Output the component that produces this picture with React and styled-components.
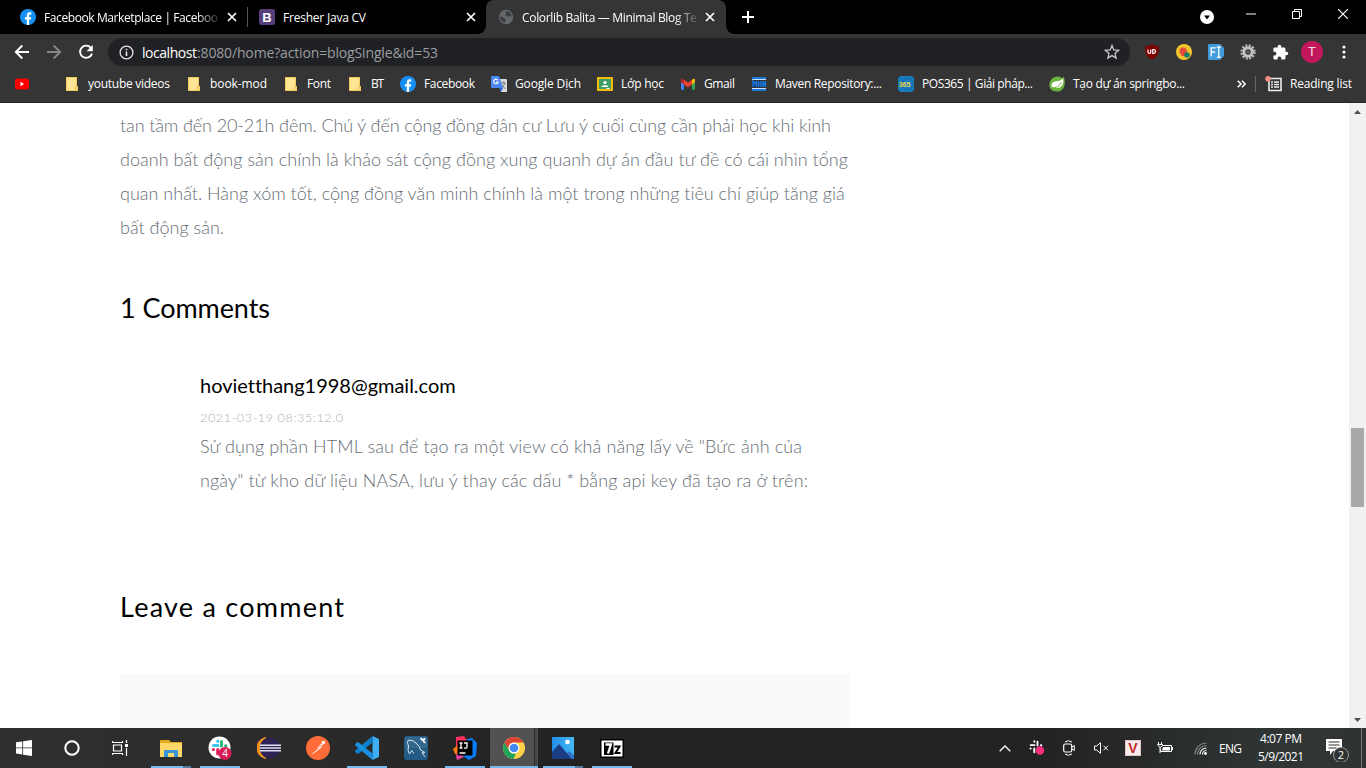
import React, { useLayoutEffect, useRef, useState } from "react";
import styled, { createGlobalStyle } from "styled-components";

const GlobalStyle = createGlobalStyle`
  * { box-sizing: border-box; }
  html, body { margin: 0; padding: 0; overflow: hidden; background: #fff; }
`;

const UI = `"Open Sans", "Noto Sans", sans-serif`;
const BODY = `Lato, "Noto Sans", sans-serif`;

const Screen = styled.div`
  width: 1366px;
  height: 768px;
  display: flex;
  flex-direction: column;
  overflow: hidden;
  font-family: ${UI};
  font-size: 12px;
`;

/* Text tracked so that it fills a given width */
const Tracked = styled.span`
  display: block;
  flex: none;
  white-space: pre;
  width: ${(p) => p.$w}px;
`;

function Fit({ w, children }) {
  const ref = useRef(null);
  const [space, setSpace] = useState(0);
  useLayoutEffect(() => {
    const natural = ref.current.getBoundingClientRect().width;
    setSpace((w - natural) / Math.max(1, children.length - 1));
  }, [w, children]);
  return (
    <Tracked $w={w}>
      <span ref={ref} style={{ letterSpacing: `${space}px` }}>{children}</span>
    </Tracked>
  );
}

/* ---------- Tab strip ---------- */
const TabStrip = styled.div`
  height: 34px;
  flex: none;
  background: #000;
  display: flex;
  color: #fff;
`;
const Tab = styled.div`
  position: relative;
  width: ${(p) => p.$w}px;
  height: 34px;
  padding-left: 12px;
  display: flex;
  align-items: center;
  gap: 8px;
  color: #fff;
  margin-left: ${(p) => p.$ml || 0}px;
  background: ${(p) => (p.$active ? "#353535" : "transparent")};
  border-radius: 8px 8px 0 0;
  ${(p) => p.$active && `
    &::before, &::after {
      content: "";
      position: absolute;
      bottom: 0;
      width: 8px;
      height: 8px;
    }
    &::before { left: -8px; background: radial-gradient(circle at 0 0, #000 7.5px, #353535 8px); }
    &::after { right: -8px; background: radial-gradient(circle at 100% 0, #000 7.5px, #353535 8px); }
  `}
`;
const TabTitle = styled.div`
  width: 175px;
  ${(p) => p.$fade && "mask-image: linear-gradient(90deg, #000 152px, transparent 179px);"}
`;
const TabDivider = styled.div`
  width: 1px;
  height: 20px;
  margin-top: 7px;
  background: #555;
`;
const CloseIcon = () => (
  <svg width="10" height="10" viewBox="0 0 10 10"><path d="M1 1l8 8M9 1l-8 8" stroke="#fff" strokeWidth="1.7" /></svg>
);
const NewTab = styled.div`
  width: 44px;
  display: flex;
  align-items: center;
  justify-content: center;
`;
const WindowControls = styled.div`
  margin-left: auto;
  display: flex;
`;
const Control = styled.div`
  width: ${(p) => p.$w || 46}px;
  height: ${(p) => p.$h || 28}px;
  display: flex;
  align-items: center;
  justify-content: center;
`;

/* ---------- Toolbar ---------- */
const Toolbar = styled.div`
  height: 36px;
  flex: none;
  background: #353535;
  display: flex;
  align-items: center;
  padding-left: 6px;
`;
const ToolButton = styled.div`
  width: 32px;
  height: 36px;
  flex: none;
  display: flex;
  align-items: center;
  justify-content: center;
`;
const Omnibox = styled.div`
  width: 1022px;
  height: 28px;
  margin: 0 6px;
  border-radius: 14px;
  background: #202124;
  display: flex;
  align-items: center;
  padding: 0 10px 0 11px;
  color: #9a9da1;
  font-size: 14px;
`;
const Url = styled.div`
  display: flex;
  margin-left: 8px;
  flex: 1;
`;
const Host = styled.span`color: #fff;`;
const Avatar = styled.div`
  width: 22px;
  height: 22px;
  border-radius: 50%;
  background: #c2185b;
  color: #f6dbe6;
  font: 13px/22px Roboto, sans-serif;
  text-align: center;
`;

/* ---------- Bookmarks ---------- */
const Bookmarks = styled.div`
  height: 33px;
  flex: none;
  background: #353535;
  border-bottom: 1px solid #242424;
  display: flex;
  align-items: center;
  gap: 16px;
  padding: 0 14px 5px;
  color: #fff;
`;
const Bookmark = styled.div`
  display: flex;
  align-items: center;
  gap: ${(p) => p.$gap ?? 8}px;
  margin-right: ${(p) => p.$mr || 0}px;
`;
const More = styled.div`
  margin-left: auto;
  display: flex;
  align-items: center;
`;
const Rule = styled.div`
  width: 1px;
  height: 16px;
  margin: 0 9px;
  background: #666;
`;

/* ---------- Page ---------- */
const Viewport = styled.div`
  height: 625px;
  flex: none;
  display: flex;
  background: #fff;
`;
const Page = styled.main`
  width: 1349px;
  height: 625px;
  padding: 5px 0 0 120px;
  overflow: hidden;
  font-family: ${BODY};
`;
const Paragraph = styled.div`
  font-size: 18px;
  font-weight: 300;
  line-height: 34px;
  color: #666d74;
`;
const Heading = styled.h3`
  margin: ${(p) => p.$mt}px 0 0;
  font-size: 27px;
  font-weight: 400;
  line-height: 34px;
  color: #000;
`;
const Comment = styled.article`
  margin: 48px 0 0 80px;
`;
const Author = styled.div`
  font-size: 20px;
  line-height: 24px;
  color: #000;
`;
const Meta = styled.div`
  margin: 11px 0 1px;
  font-size: 12.5px;
  font-weight: 300;
  line-height: 20px;
  color: #b0b0b0;
`;
const CommentBox = styled.div`
  width: 730px;
  height: 80px;
  margin-top: 50px;
  background: #f8f9fb;
`;
const Scrollbar = styled.div`
  width: 17px;
  background: #f1f1f1;
  display: flex;
  flex-direction: column;
  align-items: center;
  padding: 7px 0 6px;
`;
const Thumb = styled.div`
  width: 13px;
  height: 79px;
  margin: 314px 0 auto;
  background: #a8a8a8;
`;

/* ---------- Taskbar ---------- */
const Taskbar = styled.footer`
  height: 40px;
  flex: none;
  display: flex;
  background: linear-gradient(90deg, #303030 0, #2b2b2b 300px, #232323 500px, #232323 1050px, #303535 1280px, #303332 100%);
  color: #fff;
`;
const SystemSlot = styled.div`
  width: 48px;
  margin-right: ${(p) => p.$mr || 0}px;
  display: flex;
  align-items: center;
  justify-content: center;
`;
const AppSlot = styled.div`
  width: 49px;
  height: 40px;
  display: flex;
  flex-direction: column;
  align-items: center;
  justify-content: space-between;
  background: ${(p) => (p.$active ? "linear-gradient(90deg, #515151 44px, #292929 44px, #292929 45px, #484848 45px, #484848 48px, transparent 48px)" : "none")};
`;
const AppIcon = styled.div`
  height: 38px;
  padding-top: 2px;
  margin-right: 2px;
  display: flex;
  align-items: center;
`;
const Underline = styled.div`
  width: ${(p) => (p.$wide ? 48 : 40)}px;
  height: 2px;
  margin-right: 1px;
  background: ${(p) => (p.$split ? "linear-gradient(90deg, #76b9ed 32px, #527b9e 32px)" : "#76b9ed")};
`;
const Tray = styled.div`
  margin-left: auto;
  display: flex;
  align-items: center;
`;
const TrayIcon = styled.div`
  width: ${(p) => p.$w || 32}px;
  height: 40px;
  display: flex;
  align-items: center;
  justify-content: center;
`;
const Clock = styled.div`
  width: 46px;
  margin-left: 16px;
  display: flex;
  flex-direction: column;
  align-items: center;
  line-height: 18px;
`;
const Notify = styled.div`
  width: 41px;
  height: 40px;
  margin: 0 4px 0 17px;
  display: flex;
  align-items: center;
  border-right: 1px solid #777;
`;

/* ---------- Icons ---------- */
const Facebook = () => (
  <svg width="16" height="16" viewBox="0 0 16 16">
    <circle cx="8" cy="8" r="8" fill="#1690f5" />
    <path d="M6.8 16v-5.5H4.9V8.2h1.9V6.5c0-2.2 1.2-3.2 3-3.2.7 0 1.3.1 1.5.1v2h-1c-1 0-1.2.5-1.2 1.2v1.6h2.2l-.4 2.3H9.1V16z" fill="#fff" />
  </svg>
);
const letter = { fontFamily: "Liberation Sans", fontWeight: 700, textAnchor: "middle" };
const Bootstrap = () => (
  <svg width="16" height="16"><rect width="16" height="16" rx="2.5" fill="#563d7c" /><text x="8" y="12.6" fontSize="13" fill="#fff" {...letter}>B</text></svg>
);
const Globe = () => (
  <svg width="16" height="16" viewBox="0 0 16 16">
    <circle cx="8" cy="8" r="7.2" fill="#64686d" />
    <path d="M1.500 7.500c2-.3 3.500.2 4 1.300.5 1 2 .5 2 2v2.700C4.300 13.500 2 11 1.500 7.500zM7 2.500h4c1.500 1 2.500 3 2.500 5-1 .8-2 0-3-.2-1-.3-2 .2-2.800-.6-.8-1-.2-1.700.6-2C9 4.400 7.500 4 7 2.500z" fill="#3b3e41" />
  </svg>
);
const Back = ({ color = "#fff", flip }) => (
  <svg width="16" height="16" viewBox="0 0 16 16" transform={flip ? "scale(-1 1)" : undefined}><path d="M15 8H2M8.300 1.500L1.800 8l6.500 6.500" fill="none" stroke={color} strokeWidth="1.9" /></svg>
);
const Reload = () => (
  <svg width="16" height="16" viewBox="0 0 16 16"><path d="M13.200 4.200A6.100 6.100 0 1 0 14 9.600" fill="none" stroke="#fff" strokeWidth="1.9" /><path d="M14.800 1v6.200H8.600z" fill="#fff" /></svg>
);
const Info = () => (
  <svg width="15" height="15" viewBox="0 0 15 15"><circle cx="7.500" cy="7.500" r="6.400" fill="none" stroke="#e4e4e4" strokeWidth="1.300" /><path d="M7.500 6.500v4.500M7.500 3.700v1.600" stroke="#e4e4e4" strokeWidth="1.600" /></svg>
);
const Star = () => (
  <svg width="16" height="16" viewBox="0 0 16 16"><path d="M8 1.500l1.800 4.400 4.800.4-3.600 3.100 1.100 4.700L8 11.600l-4.100 2.500L5 9.400 1.400 6.300l4.800-.4z" fill="none" stroke="#c5c7c9" strokeWidth="1.300" /></svg>
);
const Ublock = () => (
  <svg width="16" height="16" viewBox="0 0 16 16"><path d="M8 .3c2 1.500 4 2 7 2 0 6.700-1 10.300-7 13.400C2 12.600 1 9 1 2.300 4 2.300 6 1.800 8 .3z" fill="#800000" /><path d="M4 5.600v2.600q0 1.200 1.400 1.200t1.400-1.200V5.600M8.800 5.600v3.800h.9a1.900 1.900 0 0 0 0-3.800z" fill="none" stroke="#fff" strokeWidth="1.200" /></svg>
);
const Bug = () => (
  <svg width="16" height="16" viewBox="0 0 16 16"><circle cx="8" cy="8" r="8" fill="#f5c52c" /><path d="M3.500 5.500l8 6M3 9l9-3M5 12l5-9" stroke="#b08a24" strokeWidth=".8" /><ellipse cx="7.500" cy="7.700" rx="3.400" ry="4.500" fill="#e4483a" transform="rotate(-25 7.500 8)" /><circle cx="11" cy="11" r="2.800" fill="#16816a" /></svg>
);
const FontExt = () => (
  <svg width="16" height="16" viewBox="0 0 16 16"><path d="M0 1q0-1 1-1h11l4 4v8l-4 4H1q-1 0-1-1z" fill="#419bdc" /><path d="M3.200 12.500V3.800h4.500M3.200 8h4M8.800 3h1.200l.8.8.8-.8h1.200M10.800 3.800v8.700M8.800 13.300H10l.8-.8.8.8h1.200" fill="none" stroke="#fff" strokeWidth="1.300" /></svg>
);
const Gear = () => (
  <svg width="16" height="16" viewBox="0 0 16 16"><circle cx="8" cy="8" r="6.500" fill="none" stroke="#b9b9b9" strokeWidth="2.400" strokeDasharray="2 1.400" /><circle cx="8" cy="8" r="4.200" fill="none" stroke="#c4c4c4" strokeWidth="3" /><circle cx="8" cy="8" r="1.600" fill="#666" /></svg>
);
const Puzzle = () => (
  <svg width="17" height="17" viewBox="0 0 24 24"><path d="M20.500 11H19V7a2 2 0 0 0-2-2h-4V3.500a2.500 2.500 0 0 0-5 0V5H4a2 2 0 0 0-2 2v3.800h1.500a2.700 2.700 0 0 1 0 5.400H2V20a2 2 0 0 0 2 2h3.800v-1.500a2.700 2.700 0 0 1 5.400 0V22H17a2 2 0 0 0 2-2v-4h1.500a2.500 2.500 0 0 0 0-5z" fill="#fff" /></svg>
);
const Dots = () => (
  <svg width="4" height="14"><circle cx="2" cy="2" r="1.600" fill="#fff" /><circle cx="2" cy="7" r="1.600" fill="#fff" /><circle cx="2" cy="12" r="1.600" fill="#fff" /></svg>
);
const Youtube = () => (
  <svg width="16" height="16"><rect x="1" y="2.500" width="14" height="11" rx="2.500" fill="#f00" /><path d="M6.500 5.800v4.400L10 8z" fill="#fff" /></svg>
);
const Folder = () => (
  <svg width="16" height="16"><path d="M2 1h11v9h1v5H2z" fill="#f0cb5c" /><path d="M3 2h9v9h1v3H3z" fill="#ffe494" /><path d="M11.500 14v-3.500h1.500" fill="none" stroke="#e4bc4c" /></svg>
);
const Translate = () => (
  <svg width="16" height="16"><path d="M6 3h9q1 0 1 1v12h-6z" fill="#d9dcdf" /><path d="M9.500 7h5M12 5.500V7M14 7q-1 3-4 5M10.500 9l4 4" stroke="#68757d" fill="none" /><path d="M0 1q0-1 1-1h7l4 12H1q-1 0-1-1z" fill="#4a89f3" /><path d="M8 12h4l-2 4z" fill="#3367c8" /><path d="M6.900 4.200A2.300 2.300 0 1 0 7.200 6H5" fill="none" stroke="#fff" strokeWidth="1.100" /></svg>
);
const Classroom = () => (
  <svg width="16" height="16"><rect y="1" width="16" height="14" rx="1" fill="#f7bb0b" /><rect x="2" y="3" width="12" height="10" fill="#3fa066" /><circle cx="8" cy="6.500" r="1.600" fill="#fff" /><path d="M4.500 11c0-2.500 7-2.500 7 0zM9.500 12h3v1h-3z" fill="#fff" /></svg>
);
const Gmail = () => (
  <svg width="16" height="16"><path d="M1 4v9q0 .8.800.8H4V6z" fill="#4285f4" /><path d="M15 4v9q0 .8-.8.8H12V6z" fill="#34a853" /><path d="M12 3.800l1-.8q2-.8 2 1.200v2L12 8.500z" fill="#fbbc04" /><path d="M4 3.800L3 3Q1 2.400 1 4.200v2l3 2.300z" fill="#c5221f" /><path d="M4 8.500V3.800l4 3 4-3v4.700l-4 3z" fill="#ea4335" /></svg>
);
const Maven = () => (
  <svg width="16" height="16"><path d="M1 1h14v2H1zM1 13h14v2H1z" fill="#1b77dc" /><path d="M1 3.500h14M1 12.500h14" stroke="#cde1f8" /><path d="M1 5h14v6H1z" fill="#193e6d" /><path d="M2 11V5l2 3 1.500-3v6M7.500 5v6M10 5v6M8 8h2M12 11V5l2.500 6V5" fill="none" stroke="#1b77dc" strokeWidth="1.200" /></svg>
);
const Pos = () => (
  <svg width="16" height="16"><rect width="16" height="16" rx="3.500" fill="#177bc2" /><circle cx="9.500" cy="8" r="5.500" fill="none" stroke="#1b659a" /><text x="6.500" y="10.500" fontSize="7" fill="#e7d34c" {...letter}>365</text></svg>
);
const Spring = () => (
  <svg width="16" height="16"><path d="M3 2.500Q8-1 13 2l2-1q3 12-5 14.500Q3 16 1 12-1 7 3 2.500z" fill="#6db33f" /><path d="M14 2.500Q12 5 7 5.200 1 6 3 11.300q9 2.500 11-3.500.700-3 0-5.300z" fill="#fff" /><path d="M3 12Q9 12 12.500 6.500" stroke="#6db33f" fill="none" /></svg>
);
const ReadingList = () => (
  <svg width="18" height="16"><path d="M4 2.500h12v12H4z" fill="none" stroke="#eee" strokeWidth="1.600" /><path d="M6 6h2M9 6h5M6 8.500h2M9 8.500h5M6 11h2M9 11h5" stroke="#eee" strokeWidth="1.300" /><circle cx="3" cy="2.800" r="2.800" fill="#f28b82" /></svg>
);
const Arrow = ({ up }) => (
  <svg width="7" height="4"><path d={up ? "M0 4L3.500 0 7 4z" : "M0 0h7L3.500 4z"} fill="#505050" /></svg>
);
const Windows = () => (
  <svg width="16" height="16" viewBox="0 0 16 16"><path d="M0 2.300L6.300 1.400v6.100H0zM7.100 1.300L16 0v7.500H7.100zM0 8.300h6.300v6.200L0 13.600zM7.100 8.300H16V16l-8.900-1.300z" fill="#fff" /></svg>
);
const TaskView = () => (
  <svg width="17" height="16" viewBox="0 0 17 16"><path d="M.5 1v1.500h10V1M.5 15v-1.500h10V15M1.500 5h8v6h-8zM14.500 0v3M14.500 8v8" fill="none" stroke="#fff" strokeWidth="1.200" /><path d="M13 4h3v3h-3z" fill="#fff" /></svg>
);
const Explorer = () => (
  <svg width="22" height="19" viewBox="0 0 22 19"><path d="M0 2q0-1 1-1h8l2 2h11v15H0z" fill="#e5a91c" /><path d="M0 4h22v14H0z" fill="#ffd867" /><path d="M4 18v-6q0-1 1-1h12q1 0 1 1v6h-4v-4H8v4z" fill="#3993db" /></svg>
);
const SlackMark = ({ mono }) => {
  const c = mono ? ["#fff", "#fff", "#fff", "#fff"] : ["#36c5f0", "#2eb67d", "#ecb22e", "#e01e5a"];
  return (
    <g strokeWidth={mono ? 2.2 : 3} strokeLinecap="round" fill="none">
      <path d="M2 6h4.500M6.300 1.500v.5" stroke={c[0]} /><path d="M10 2v4.500M14.500 6.200H14" stroke={c[1]} />
      <path d="M9.800 10.200H14M10 14v.5" stroke={c[2]} /><path d="M6.200 10v4.500M1.800 10H2" stroke={c[3]} />
    </g>
  );
};
const Slack = () => (
  <svg width="24" height="24" viewBox="0 0 24 24"><circle cx="11.500" cy="11.500" r="11" fill="#fff" /><g transform="translate(3.500 3.500)"><SlackMark /></g><circle cx="17" cy="17.500" r="6.500" fill="#d81b57" /><text x="17" y="21.200" fontSize="10" fill="#fff" fontFamily="Open Sans" textAnchor="middle">4</text></svg>
);
const Eclipse = () => (
  <svg width="24" height="22" viewBox="0 0 24 22"><path d="M9 .5a10.600 10.600 0 0 0 0 21A12 12 0 0 1 9 .5z" fill="#f7941e" stroke="#f7941e" /><circle cx="13" cy="11" r="10.300" fill="#2c2255" /><path d="M3 8.300h21M2.500 11h22M3 13.700h21" stroke="#e4e2ee" strokeWidth="1.600" /></svg>
);
const Postman = () => (
  <svg width="24" height="24" viewBox="0 0 24 24"><circle cx="12" cy="12" r="12" fill="#ff6c37" /><path d="M5 19l6-6 3.500-3 1.500 1-5 4z" fill="#fff" /><path d="M12 12.500l4.500-4.500" stroke="#fff" strokeWidth="1.800" /><circle cx="17.500" cy="6.500" r="1.700" fill="#fff" /><path d="M8 16l8-7" stroke="#ff6c37" strokeWidth=".8" /></svg>
);
const VSCode = () => (
  <svg width="24" height="24" viewBox="0 0 24 24"><path d="M17.500 0L24 3v18l-6.500 3z" fill="#3eaef5" /><path d="M17.500 0v6.500L4 17.300 2.500 18 0 15.800v-1z" fill="#0f7fcc" /><path d="M17.500 24v-6.500L4 6.700 2.500 6 0 8.200v1z" fill="#1892df" /></svg>
);
const MySQL = () => (
  <svg width="24" height="24" viewBox="0 0 24 24"><rect width="24" height="24" rx="3" fill="#235b84" /><rect x="1" y="1" width="22" height="11" rx="2" fill="#32688e" /><path d="M5.500 18Q3 15 4.500 10 2.500 6 4.200 4.300 8 3 12 7q4 3.500 4.500 7l4.500 2.500-3 .3 3 4M5.500 18l2.200-3.500 2.200 3" fill="none" stroke="#dfeaf1" strokeWidth="1" /><path d="M16.500 2l1.500 1.800L20.500 3l-1 2.500L21.500 7" fill="none" stroke="#fff" strokeWidth="1.500" /></svg>
);
const IntelliJ = () => (
  <svg width="24" height="24" viewBox="0 0 24 24"><path d="M3 1l8-1 4 6-3 12-8 6-1-6z" fill="#fe315d" /><path d="M0 13l5-4 3 8-6 1z" fill="#f97a12" /><path d="M14 3l5-1 5 5-1 13-7 4-6-4z" fill="#087cfa" /><path d="M3 18l5 1 3 2-7 3z" fill="#e843a5" /><rect x="4.500" y="4.500" width="15" height="15" fill="#000" /><path d="M6.500 7h3M8 7v5M6.500 12h3M11 7h3v4q0 1.200-1.300 1.200H11M6.500 17h6" fill="none" stroke="#fff" strokeWidth="1.300" /></svg>
);
const Chrome = () => (
  <svg width="22" height="22" viewBox="0 0 22 22"><circle cx="11" cy="11" r="11" fill="#fdd246" /><path d="M1.500 5.500A11 11 0 0 1 20.500 5.500H11A5.500 5.500 0 0 0 6.200 13.700z" fill="#dc4437" /><path d="M1.500 5.500L6.200 13.700A5.500 5.500 0 0 0 13 16.200L10.500 22A11 11 0 0 1 1.500 5.500z" fill="#1ca45c" /><circle cx="11" cy="11" r="5.500" fill="#fff" /><circle cx="11" cy="11" r="4.300" fill="#4688f1" /></svg>
);
const Photos = () => (
  <svg width="22" height="22" viewBox="0 0 22 22"><defs><linearGradient id="sky" x2="1"><stop stopColor="#238ee8" /><stop offset="1" stopColor="#43b9f5" /></linearGradient></defs><rect width="22" height="22" fill="url(#sky)" /><path d="M10 22l7-8 5 4v4z" fill="#3276cf" /><path d="M0 15l7-8 13 15H0z" fill="#1b3d84" /><circle cx="15.500" cy="5" r="2.300" fill="#fff" /></svg>
);
const SevenZip = () => (
  <svg width="24" height="19" viewBox="0 0 24 19"><rect x=".5" y=".5" width="23" height="18" fill="#000" stroke="#000" /><path d="M1.500 1.500h21v16h-21z" fill="#fff" /><path d="M4 3.500h9.500v12.500H4z" fill="#000" /><path d="M5.500 5.500h5.500l-3 9" fill="none" stroke="#fff" strokeWidth="2.300" /><path d="M14.500 7.500h5l-4 6.500h5" fill="none" stroke="#000" strokeWidth="2" /></svg>
);
const Battery = () => (
  <svg width="17" height="12" viewBox="0 0 17 12"><path d="M5.500 3.500h9v6H3.500V7M15.500 5v3" fill="none" stroke="#fff" /><path d="M6 5h7v3.500H5z" fill="#fff" /><path d="M1.500 0v2M4.500 0v2M.5 2.500h5v1.500L3 5.500z M3 5v6" fill="none" stroke="#fff" /></svg>
);
const Wifi = () => (
  <svg width="13" height="13" viewBox="0 0 13 13"><g fill="none" strokeWidth="1.200"><path d="M1 12.500A11.500 11.500 0 0 1 12.500 1M3.500 12.500a9 9 0 0 1 9-9" stroke="#888" /><path d="M6 12.500a6.500 6.500 0 0 1 6.500-6.500M8.500 12.500a4 4 0 0 1 4-4" stroke="#eee" /></g><circle cx="11.500" cy="11.500" r="1.400" fill="#fff" /></svg>
);

const bookmarks = [
  [Folder, "youtube videos", 82],
  [Folder, "book-mod", 57],
  [Folder, "Font", 24],
  [Folder, "BT", 13],
  [Facebook, "Facebook", 51],
  [Translate, "Google Dịch", 66],
  [Classroom, "Lớp học", 43],
  [Gmail, "Gmail", 31],
  [Maven, "Maven Repository:...", 107],
  [Pos, "POS365 | Giải pháp...", 111],
  [Spring, "Tạo dự án springbo...", 112],
];

const article = [
  ["tan tầm đến 20-21h đêm. Chú ý đến cộng đồng dân cư Lưu ý cuối cùng cần phải học khi kinh", 711],
  ["doanh bất động sản chính là khảo sát cộng đồng xung quanh dự án đầu tư đề có cái nhìn tổng", 728],
  ["quan nhất. Hàng xóm tốt, cộng đồng văn minh chính là một trong những tiêu chí giúp tăng giá", 725],
  ["bất động sản.", 104],
];

const comment = [
  ['Sử dụng phần HTML sau để tạo ra một view có khả năng lấy về "Bức ảnh của', 602],
  ['ngày" từ kho dữ liệu NASA, lưu ý thay các dấu * bằng api key đã tạo ra ở trên:', 608],
];

const apps = [
  { Icon: Explorer, open: true, split: true },
  { Icon: Slack, open: true },
  { Icon: Eclipse },
  { Icon: Postman },
  { Icon: VSCode, open: true },
  { Icon: MySQL },
  { Icon: IntelliJ, open: true },
  { Icon: Chrome, open: true, active: true },
  { Icon: Photos, open: true, split: true },
  { Icon: SevenZip, open: true },
];

export default function App() {
  return (
    <Screen>
      <GlobalStyle />
      <TabStrip>
        <Tab $w={239} $ml={8}>
          <Facebook />
          <TabTitle $fade><Fit w={174}>Facebook Marketplace | Faceboo</Fit></TabTitle>
          <CloseIcon />
        </Tab>
        <TabDivider />
        <Tab $w={238} $ml={-1}>
          <Bootstrap />
          <TabTitle><Fit w={83}>Fresher Java CV</Fit></TabTitle>
          <CloseIcon />
        </Tab>
        <Tab $w={240} $ml={1} $active>
          <Globe />
          <TabTitle $fade><Fit w={175}>Colorlib Balita — Minimal Blog Te</Fit></TabTitle>
          <CloseIcon />
        </Tab>
        <NewTab><svg width="12" height="12"><path d="M6 0v12M0 6h12" stroke="#fff" strokeWidth="2" /></svg></NewTab>
        <WindowControls>
          <Control $w={42} $h={34}><svg width="14" height="14"><circle cx="7" cy="7" r="7" fill="#fff" /><path d="M4 5.500h6L7 9.500z" fill="#000" /></svg></Control>
          <Control><svg width="10" height="2"><path d="M0 1h10" stroke="#fff" /></svg></Control>
          <Control><svg width="11" height="11"><path d="M.5 2.500h7v7h-7zM2.500 2.500v-2h7v7h-2" fill="none" stroke="#fff" /></svg></Control>
          <Control><svg width="10" height="10"><path d="M0 0l10 10M10 0L0 10" stroke="#fff" strokeWidth="1.200" /></svg></Control>
        </WindowControls>
      </TabStrip>

      <Toolbar>
        <ToolButton><Back /></ToolButton>
        <ToolButton><Back color="#858585" flip /></ToolButton>
        <ToolButton><Reload /></ToolButton>
        <Omnibox>
          <Info />
          <Url>
            <Host><Fit w={55}>localhost</Fit></Host>
            <Fit w={241}>:8080/home?action=blogSingle&id=53</Fit>
          </Url>
          <Star />
        </Omnibox>
        <ToolButton><Ublock /></ToolButton>
        <ToolButton><Bug /></ToolButton>
        <ToolButton><FontExt /></ToolButton>
        <ToolButton><Gear /></ToolButton>
        <ToolButton><Puzzle /></ToolButton>
        <ToolButton><Avatar>T</Avatar></ToolButton>
        <ToolButton><Dots /></ToolButton>
      </Toolbar>

      <Bookmarks>
        <Bookmark $mr={18}><Youtube /></Bookmark>
        {bookmarks.map(([Icon, name, w]) => (
          <Bookmark key={name}><Icon /><Fit w={w}>{name}</Fit></Bookmark>
        ))}
        <More>
          <svg width="9" height="8"><path d="M.7.7L4 4 .7 7.300M4.900.7L8.200 4 4.900 7.300" fill="none" stroke="#fff" strokeWidth="1.500" /></svg>
          <Rule />
          <Bookmark $gap={7}><ReadingList /><Fit w={62}>Reading list</Fit></Bookmark>
        </More>
      </Bookmarks>

      <Viewport>
        <Page>
          <Paragraph>{article.map(([t, w]) => <Fit key={t} w={w}>{t}</Fit>)}</Paragraph>
          <Heading $mt={47}><Fit w={150}>1 Comments</Fit></Heading>
          <Comment>
            <Author><Fit w={255}>hovietthang1998@gmail.com</Fit></Author>
            <Meta><Fit w={143}>2021-03-19 08:35:12.0</Fit></Meta>
            <Paragraph>{comment.map(([t, w]) => <Fit key={t} w={w}>{t}</Fit>)}</Paragraph>
          </Comment>
          <Heading $mt={93}><Fit w={224}>Leave a comment</Fit></Heading>
          <CommentBox />
        </Page>
        <Scrollbar><Arrow up /><Thumb /><Arrow /></Scrollbar>
      </Viewport>

      <Taskbar>
        <SystemSlot><Windows /></SystemSlot>
        <SystemSlot><svg width="16" height="16"><circle cx="8" cy="8" r="6.700" fill="none" stroke="#fff" strokeWidth="2" /></svg></SystemSlot>
        <SystemSlot $mr={3}><TaskView /></SystemSlot>
        {apps.map(({ Icon, open, split, active }, i) => (
          <AppSlot key={i} $active={active}>
            <AppIcon><Icon /></AppIcon>
            {open && <Underline $wide={active} $split={split} />}
          </AppSlot>
        ))}
        <Tray>
          <TrayIcon><svg width="12" height="7"><path d="M.7 6.300L6 1l5.300 5.300" fill="none" stroke="#fff" strokeWidth="1.300" /></svg></TrayIcon>
          <TrayIcon><svg width="16" height="16"><g transform="scale(.85)"><SlackMark mono /></g><circle cx="11" cy="10.500" r="4.200" fill="#ff2e7e" /></svg></TrayIcon>
          <TrayIcon><svg width="12" height="16"><rect x=".7" y="4" width="8" height="8" rx="1.500" fill="none" stroke="#fff" strokeWidth="1.200" /><path d="M9 7l2.300-1.500v5L9 9M2 2q3-2.500 7 0M2 14q3 2.500 7 0" fill="none" stroke="#fff" /></svg></TrayIcon>
          <TrayIcon><svg width="15" height="12"><path d="M.5 4h2.200L6.500.7v10.600L2.700 8H.5zM9.500 3.800l4.500 4.500M14 3.800L9.500 8.300" fill="none" stroke="#fff" /></svg></TrayIcon>
          <TrayIcon><svg width="16" height="16"><rect width="16" height="16" fill="#e9c6c6" /><rect x="1" y="1" width="14" height="14" fill="#f6ecec" /><text x="8" y="13" fontSize="14" fill="#c3272b" {...letter}>V</text></svg></TrayIcon>
          <TrayIcon><Battery /></TrayIcon>
          <TrayIcon $w={38}><Wifi /></TrayIcon>
          <Fit w={23}>ENG</Fit>
          <Clock><Fit w={42}>4:07 PM</Fit><Fit w={46}>5/9/2021</Fit></Clock>
          <Notify>
            <svg width="28" height="28" viewBox="0 0 28 28"><path d="M5 5h16v12H12l-3 4v-4H5z" fill="#fff" /><path d="M7.500 8h11M7.500 11h11M7.500 14h8" stroke="#2d2f2f" /><circle cx="20" cy="21" r="7.500" fill="#303333" stroke="#999" /><text x="20" y="25" fontSize="11" fill="#fff" fontFamily="Open Sans" textAnchor="middle">2</text></svg>
          </Notify>
        </Tray>
      </Taskbar>
    </Screen>
  );
}
